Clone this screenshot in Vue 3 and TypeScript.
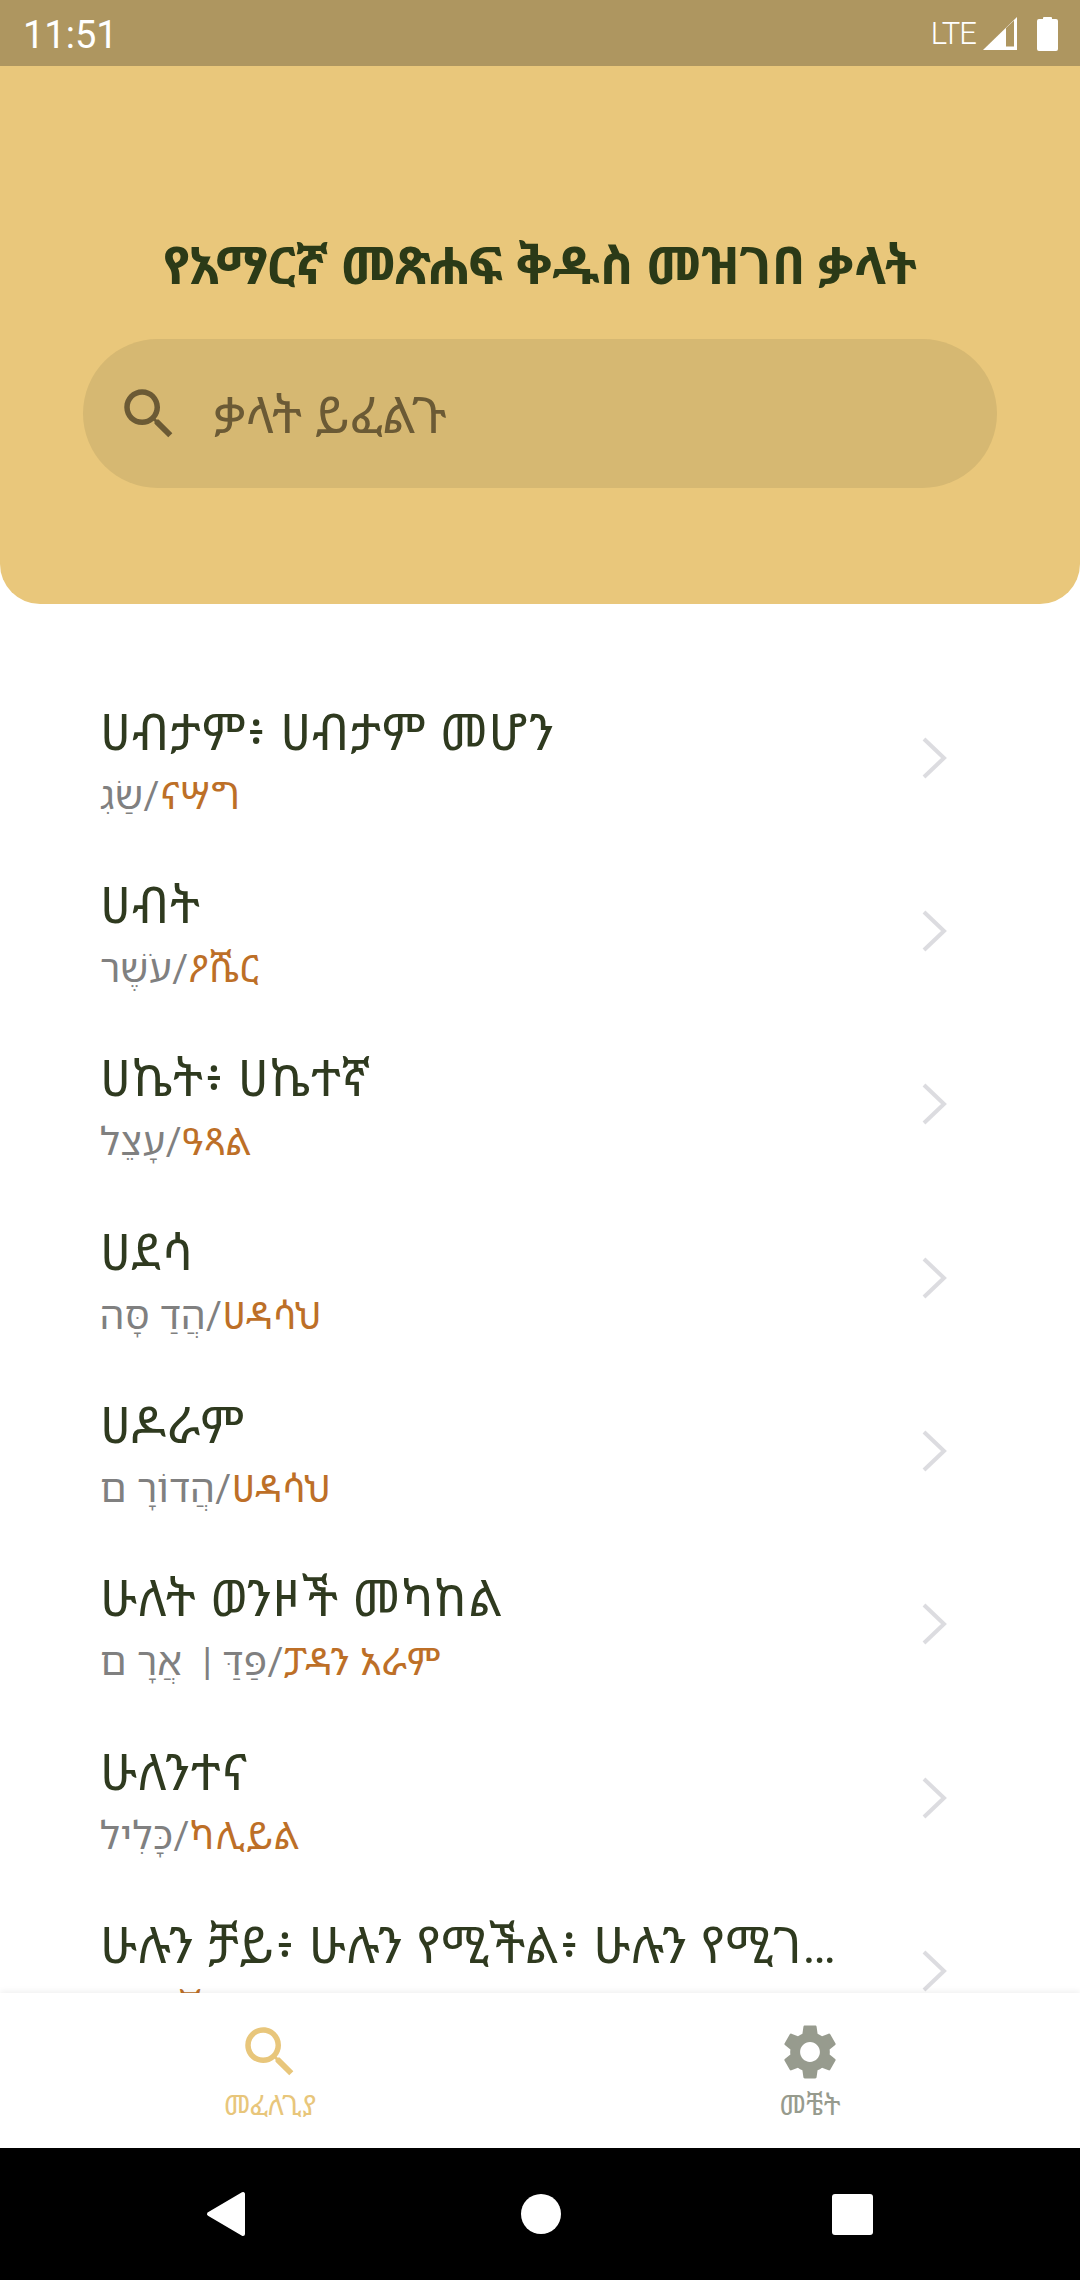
<template>
  <div class="phone">
    <div class="status">
      <span class="time">11:51</span>
      <div class="status-right">
        <span class="lte">LTE</span>
        <svg class="signal" width="34" height="33" viewBox="0 0 34 33">
          <path d="M34 0V33H0Z" fill="#fff" />
          <path d="M23 11V29.5H31V3.5Z" fill="#ae9660" />
        </svg>
        <svg class="battery" width="21" height="35" viewBox="0 0 21 35">
          <path d="M6 3V2a1 1 0 0 1 1-1h7a1 1 0 0 1 1 1v1h4a2 2 0 0 1 2 2v28a2 2 0 0 1-2 2H2a2 2 0 0 1-2-2V5a2 2 0 0 1 2-2Z" fill="#fff" />
        </svg>
      </div>
    </div>

    <header class="hero">
      <h1>የአማርኛ መጽሐፍ ቅዱስ መዝገበ ቃላት</h1>
      <div class="search">
        <svg class="search-icon" width="66" height="66" viewBox="0 0 24 24">
          <path :d="searchPath" fill="#6b5a35" />
        </svg>
        <span>ቃላት ይፈልጉ</span>
      </div>
    </header>

    <main class="list">
      <div v-for="item in words" :key="item.title" class="row">
        <div class="row-text">
          <div class="title">{{ item.title }}</div>
          <div class="sub">{{ item.hebrew }}/<span class="amharic">{{ item.amharic }}</span></div>
        </div>
        <svg class="chevron" width="26" height="42" viewBox="0 0 26 42">
          <path d="M3 2L23 21L3 40" fill="none" stroke="#dcdce0" stroke-width="4" />
        </svg>
      </div>
    </main>

    <nav class="tabs">
      <div class="tab active">
        <svg width="66" height="66" viewBox="0 0 24 24"><path :d="searchPath" fill="#e8c67b" /></svg>
        <span>መፈለጊያ</span>
      </div>
      <div class="tab">
        <svg width="66" height="66" viewBox="0 0 24 24"><path :d="gearPath" fill="#979b8e" /></svg>
        <span>መቼት</span>
      </div>
    </nav>

    <div class="sysnav">
      <svg width="40" height="46" viewBox="0 0 40 46">
        <path d="M37 3V43L3 23Z" fill="#fff" stroke="#fff" stroke-width="4" stroke-linejoin="round" />
      </svg>
      <div class="home"></div>
      <div class="recent"></div>
    </div>
  </div>
</template>

<script setup lang="ts">
interface Word {
  title: string
  hebrew: string
  amharic: string
}

const searchPath =
  'M15.5 14h-.79l-.28-.27C15.41 12.59 16 11.11 16 9.5 16 5.91 13.09 3 9.5 3S3 5.91 3 9.5 5.91 16 9.5 16c1.61 0 3.09-.59 4.23-1.57l.27.28v.79l5 4.99L20.49 19l-4.99-5zm-6 0C7.01 14 5 11.99 5 9.5S7.01 5 9.5 5 14 7.01 14 9.5 11.99 14 9.5 14z'
const gearPath =
  'M19.14 12.94c.04-.3.06-.61.06-.94 0-.32-.02-.64-.07-.94l2.03-1.58c.18-.14.23-.41.12-.61l-1.92-3.32c-.12-.22-.37-.29-.59-.22l-2.39.96c-.5-.38-1.03-.7-1.62-.94l-.36-2.54c-.04-.24-.24-.41-.48-.41h-3.84c-.24 0-.43.17-.47.41l-.36 2.54c-.59.24-1.13.57-1.62.94l-2.39-.96c-.22-.08-.47 0-.59.22L2.74 8.87c-.12.21-.08.47.12.61l2.03 1.58c-.05.3-.09.63-.09.94s.02.64.07.94l-2.03 1.58c-.18.14-.23.41-.12.61l1.92 3.32c.12.22.37.29.59.22l2.39-.96c.5.38 1.03.7 1.62.94l.36 2.54c.05.24.24.41.48.41h3.84c.24 0 .44-.17.47-.41l.36-2.54c.59-.24 1.13-.56 1.62-.94l2.39.96c.22.08.47 0 .59-.22l1.92-3.32c.12-.22.07-.47-.12-.61l-2.01-1.58zM12 15.6c-1.98 0-3.6-1.62-3.6-3.6s1.62-3.6 3.6-3.6 3.6 1.62 3.6 3.6-1.62 3.6-3.6 3.6z'

const words: Word[] = [
  { title: 'ሀብታም፥ ሀብታም መሆን', hebrew: 'שַׂגִ', amharic: 'ናሣግ' },
  { title: 'ሀብት', hebrew: 'עֹשֶׁר', amharic: 'ዖሼር' },
  { title: 'ሀኬት፥ ሀኬተኛ', hebrew: 'עָצֵל', amharic: 'ዓጻል' },
  { title: 'ሀደሳ', hebrew: 'הֲדַ סָּה', amharic: 'ሀዳሳህ' },
  { title: 'ሀዶራም', hebrew: 'הֲדוֹרָ ם', amharic: 'ሀዳሳህ' },
  { title: 'ሁለት ወንዞች መካከል', hebrew: 'פַּדַּ |  אֲרָ ם', amharic: 'ፓዳን አራም' },
  { title: 'ሁለንተና', hebrew: 'כָּלִיל', amharic: 'ካሊይል' },
  { title: 'ሁሉን ቻይ፥ ሁሉን የሚችል፥ ሁሉን የሚገዛ አምላክ', hebrew: 'שַׁדַּי', amharic: 'ሻዳይ' }
]
</script>

<style>
html,
body {
  margin: 0;
  background: #fff;
}
</style>

<style scoped>
.phone {
  width: 1080px;
  height: 2280px;
  display: flex;
  flex-direction: column;
  overflow: hidden;
  background: #fff;
  font-family: Roboto, "Noto Sans Ethiopic", "Noto Sans Hebrew", "DejaVu Sans", sans-serif;
}
.status {
  flex: none;
  height: 66px;
  background: #ae9660;
  color: #fff;
  display: flex;
  align-items: center;
  justify-content: space-between;
  padding: 0 22px 0 23px;
}
.time {
  font-size: 38px;
  padding-top: 3px;
}
.status-right {
  display: flex;
  align-items: center;
}
.lte {
  font-size: 31px;
  font-weight: 300;
  letter-spacing: -1px;
  margin-right: 7px;
}
.battery {
  margin-left: 20px;
}
.hero {
  flex: none;
  height: 538px;
  box-sizing: border-box;
  background: #e9c77b;
  border-radius: 0 0 40px 40px;
  padding: 166px 83px 0;
}
h1 {
  margin: 0 0 37px;
  height: 70px;
  line-height: 70px;
  text-align: center;
  font-size: 52px;
  font-weight: 700;
  color: #2b3a17;
  white-space: nowrap;
}
.search {
  height: 149px;
  border-radius: 75px;
  background: #d6b872;
  display: flex;
  align-items: center;
  padding-left: 33px;
  font-size: 50px;
  color: #6b5a35;
}
.search-icon {
  margin-right: 32px;
}
.list {
  flex: 1;
  min-height: 0;
  overflow: hidden;
  padding: 67px 133px 0 100px;
}
.row {
  height: 173.33px;
  display: flex;
  align-items: center;
  justify-content: space-between;
}
.row-text {
  width: 745px;
  padding-top: 3px;
}
.title {
  font-size: 50px;
  line-height: 66px;
  letter-spacing: 1px;
  color: #2f3a1f;
  white-space: nowrap;
  overflow: hidden;
  text-overflow: ellipsis;
}
.sub {
  margin-top: 7px;
  font-size: 38.5px;
  line-height: 46px;
  letter-spacing: 0.5px;
  color: #808080;
  white-space: pre;
}
.amharic {
  color: #bd6f27;
}
.chevron {
  flex: none;
}
.tabs {
  flex: none;
  height: 155px;
  background: #fff;
  display: flex;
  box-shadow: 0 -2px 6px rgba(0, 0, 0, 0.06);
  position: relative;
}
.tab {
  flex: 1;
  display: flex;
  flex-direction: column;
  align-items: center;
  padding-top: 26px;
  font-size: 28px;
  line-height: 32px;
  color: #979b8e;
}
.tab span {
  margin-top: 5px;
}
.tab.active {
  color: #e8c67b;
}
.sysnav {
  flex: none;
  height: 132px;
  background: #000;
  display: flex;
  align-items: center;
  padding-left: 206px;
}
.home {
  width: 40px;
  height: 40px;
  border-radius: 50%;
  background: #fff;
  margin-left: 275px;
}
.recent {
  width: 41px;
  height: 41px;
  border-radius: 3px;
  background: #fff;
  margin-left: 271px;
}
</style>
